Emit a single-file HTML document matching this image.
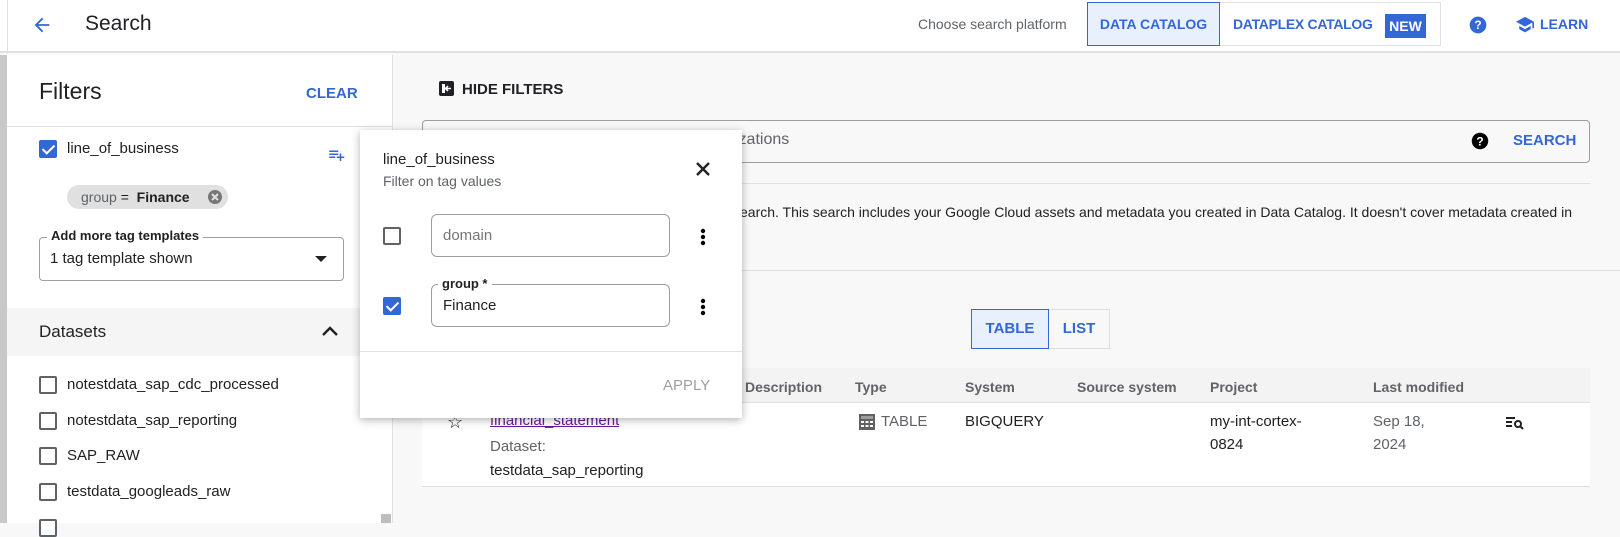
<!DOCTYPE html>
<html><head><meta charset="utf-8"><style>
*{box-sizing:border-box;margin:0;padding:0}
body{width:1620px;height:523px;overflow:hidden;background:#f8f8f8;font-family:"Liberation Sans",Arial,sans-serif;color:#202124;position:relative;font-size:14px}
.a{position:absolute;white-space:nowrap}
.blue{color:#3367d6}
.cb{position:absolute;width:18px;height:18px;border:2px solid #5f6368;border-radius:2px;background:#fff}
.cb.on{background:#3367d6;border-color:#3367d6}
.cb.on:after{content:"";position:absolute;left:4px;top:0px;width:5px;height:10px;border:solid #fff;border-width:0 2px 2px 0;transform:rotate(45deg)}
</style></head><body>
<!-- header -->
<div class="a" style="left:0;top:0;width:1620px;height:53px;background:#fff;border-bottom:2px solid #e0e0e0"></div>
<div class="a" style="left:7px;top:0;width:1px;height:53px;background:#e0e0e0"></div>
<svg class="a" style="left:31px;top:14px" width="22" height="22" viewBox="0 0 24 24"><path d="M20 11H7.8l5.6-5.6L12 4l-8 8 8 8 1.4-1.4L7.8 13H20z" fill="#3367d6"/></svg>
<div class="a" style="left:85px;top:12px;font-size:21px">Search</div>
<div class="a" style="left:918px;top:16px;font-size:14px;color:#5f6368">Choose search platform</div>
<div class="a" style="left:1087px;top:2px;width:133px;height:44px;background:#e8f0fe;border:1px solid #3367d6;font-size:14px;font-weight:bold;line-height:42px;text-align:center" ><span class="blue">DATA CATALOG</span></div>
<div class="a" style="left:1220px;top:2px;width:221px;height:44px;border:1px solid #e0e0e0;border-left:none"></div>
<div class="a blue" style="left:1233px;top:16px;font-size:14px;font-weight:bold;letter-spacing:-0.3px">DATAPLEX CATALOG</div>
<div class="a" style="left:1385px;top:14px;width:41px;height:24px;background:#3367d6;color:#fff;font-weight:bold;font-size:14px;text-align:center;line-height:24px">NEW</div>
<svg class="a" style="left:1468px;top:15px" width="20" height="20" viewBox="0 0 24 24"><circle cx="12" cy="12" r="10" fill="#3367d6"/><text x="12" y="17" font-size="14" font-weight="bold" fill="#fff" text-anchor="middle" font-family="Liberation Sans">?</text></svg>
<svg class="a" style="left:1515px;top:16px" width="20" height="18" viewBox="0 0 24 22"><path d="M12 1L1 7l11 6 9-5v7h2V7z M5 12v4l7 4 7-4v-4l-7 4z" fill="#3367d6"/></svg>
<div class="a blue" style="left:1540px;top:16px;font-size:14px;font-weight:bold">LEARN</div>

<!-- sidebar -->
<div class="a" style="left:0;top:55px;width:7px;height:468px;background:#c8c8c8"></div>
<div class="a" style="left:7px;top:55px;width:386px;height:468px;background:#fff;border-right:1px solid #e0e0e0"></div>
<div class="a" style="left:39px;top:78px;font-size:23px">Filters</div>
<div class="a blue" style="left:306px;top:85px;font-size:15px;font-weight:bold">CLEAR</div>
<div class="a" style="left:7px;top:126px;width:386px;height:1px;background:#e0e0e0"></div>
<div class="cb on" style="left:39px;top:140px"></div>
<div class="a" style="left:67px;top:140px;font-size:15px">line_of_business</div>
<svg class="a" style="left:326px;top:146px" width="20" height="18" viewBox="0 0 24 24"><path d="M3 6h12v2H3zm0 4h12v2H3zm0 4h8v2H3zm14 0v-4h2v4h4v2h-4v4h-2v-4h-4v-2z" fill="#3367d6"/></svg>
<div class="a" style="left:67px;top:185px;width:161px;height:24px;background:#e0e0e0;border-radius:12px"></div>
<div class="a" style="left:81px;top:189px;font-size:14px;color:#5f6368">group <span style="color:#202124">=</span> &nbsp;<span style="color:#202124;font-weight:bold">Finance</span></div>
<svg class="a" style="left:207px;top:189px" width="16" height="16" viewBox="0 0 16 16"><circle cx="8" cy="8" r="7" fill="#757575"/><path d="M5 5l6 6M11 5l-6 6" stroke="#e0e0e0" stroke-width="2"/></svg>
<div class="a" style="left:39px;top:237px;width:305px;height:44px;border:1px solid #9e9e9e;border-radius:4px"></div>
<div class="a" style="left:47px;top:228px;background:#fff;padding:0 4px;font-size:13px;font-weight:bold">Add more tag templates</div>
<div class="a" style="left:50px;top:250px;font-size:15px">1 tag template shown</div>
<div class="a" style="left:315px;top:256px;width:0;height:0;border-left:6px solid transparent;border-right:6px solid transparent;border-top:6px solid #202124"></div>
<div class="a" style="left:7px;top:308px;width:386px;height:48px;background:#f5f5f5"></div>
<div class="a" style="left:39px;top:322px;font-size:17px">Datasets</div>
<svg class="a" style="left:320px;top:323px" width="20" height="16" viewBox="0 0 20 16"><path d="M3 12l7-7 7 7" stroke="#202124" stroke-width="2.4" fill="none"/></svg>
<div class="cb" style="left:39px;top:376px"></div><div class="a" style="left:67px;top:376px;font-size:15px">notestdata_sap_cdc_processed</div>
<div class="cb" style="left:39px;top:412px"></div><div class="a" style="left:67px;top:412px;font-size:15px">notestdata_sap_reporting</div>
<div class="cb" style="left:39px;top:447px"></div><div class="a" style="left:67px;top:447px;font-size:15px">SAP_RAW</div>
<div class="cb" style="left:39px;top:483px"></div><div class="a" style="left:67px;top:483px;font-size:15px">testdata_googleads_raw</div>
<div class="cb" style="left:39px;top:519px"></div>
<div class="a" style="left:381px;top:514px;width:10px;height:9px;background:#bdbdbd"></div>

<!-- main -->
<svg class="a" style="left:438px;top:80px" width="17" height="17" viewBox="0 0 17 17"><rect x="1" y="1" width="15" height="15" rx="2" fill="#202124"/><rect x="4" y="4" width="3" height="9" fill="#fff"/><path d="M13 8.5H8M10 6l-2.5 2.5L10 11" stroke="#fff" stroke-width="1.6" fill="none"/></svg>
<div class="a" style="left:462px;top:81px;font-size:15px;font-weight:bold">HIDE FILTERS</div>
<div class="a" style="left:422px;top:120px;width:1168px;height:43px;border:1px solid #9e9e9e;border-radius:4px;background:#f8f8f8"></div>
<div class="a" style="left:735px;top:131px;font-size:16px;color:#5f6368">izations</div>
<svg class="a" style="left:1471px;top:132px" width="18" height="18" viewBox="0 0 24 24"><circle cx="12" cy="12" r="11" fill="#000"/><text x="12" y="18" font-size="16" font-weight="bold" fill="#fff" text-anchor="middle" font-family="Liberation Sans">?</text></svg>
<div class="a blue" style="left:1513px;top:132px;font-size:15px;font-weight:bold">SEARCH</div>
<div class="a" style="left:422px;top:183px;width:1168px;height:1px;background:#e0e0e0"></div>
<div class="a" style="left:740px;top:204px;font-size:14px">earch. This search includes your Google Cloud assets and metadata you created in Data Catalog. It doesn't cover metadata created in</div>
<div class="a" style="left:393px;top:270px;width:1227px;height:1px;background:#e0e0e0"></div>
<div class="a" style="left:971px;top:309px;width:78px;height:40px;background:#e8f0fe;border:1px solid #3367d6;line-height:38px;text-align:center;font-weight:bold;font-size:15px;color:#3367d6">TABLE</div>
<div class="a" style="left:1049px;top:309px;width:61px;height:40px;border:1px solid #ddd;border-left:none;line-height:38px;text-align:center;font-weight:bold;font-size:15px;color:#3367d6">LIST</div>
<div class="a" style="left:422px;top:368px;width:1168px;height:35px;background:#f3f3f3;border-bottom:1px solid #e0e0e0"></div>
<div class="a" style="left:422px;top:403px;width:1168px;height:84px;background:#fff;border-bottom:1px solid #e0e0e0"></div>
<div class="a" style="top:379px;left:745px;font-size:14px;font-weight:bold;color:#5f6368">Description</div>
<div class="a" style="top:379px;left:855px;font-size:14px;font-weight:bold;color:#5f6368">Type</div>
<div class="a" style="top:379px;left:965px;font-size:14px;font-weight:bold;color:#5f6368">System</div>
<div class="a" style="top:379px;left:1077px;font-size:14px;font-weight:bold;color:#5f6368">Source system</div>
<div class="a" style="top:379px;left:1210px;font-size:14px;font-weight:bold;color:#5f6368">Project</div>
<div class="a" style="top:379px;left:1373px;font-size:14px;font-weight:bold;color:#5f6368">Last modified</div>
<div class="a" style="left:447px;top:412px;font-size:18px">☆</div>
<div class="a" style="left:490px;top:412px;font-size:15px;color:#6a1b9a;text-decoration:underline">financial_statement</div>
<div class="a" style="left:490px;top:438px;font-size:15px;color:#5f6368">Dataset:</div>
<div class="a" style="left:490px;top:462px;font-size:15px">testdata_sap_reporting</div>
<svg class="a" style="left:858px;top:413px" width="18" height="18" viewBox="0 0 18 18"><rect x="1" y="1" width="16" height="16" fill="#616161"/><path d="M3 3h12v3H3z" fill="#9e9e9e"/><g fill="#fff"><rect x="3" y="8" width="3" height="2"/><rect x="7.5" y="8" width="3" height="2"/><rect x="12" y="8" width="3" height="2"/><rect x="3" y="12" width="3" height="2"/><rect x="7.5" y="12" width="3" height="2"/><rect x="12" y="12" width="3" height="2"/></g></svg>
<div class="a" style="left:881px;top:413px;font-size:15px;color:#5f6368">TABLE</div>
<div class="a" style="left:965px;top:413px;font-size:15px">BIGQUERY</div>
<div class="a" style="left:1210px;top:413px;font-size:15px">my-int-cortex-</div>
<div class="a" style="left:1210px;top:436px;font-size:15px">0824</div>
<div class="a" style="left:1373px;top:413px;font-size:15px;color:#5f6368">Sep 18,</div>
<div class="a" style="left:1373px;top:436px;font-size:15px;color:#5f6368">2024</div>
<svg class="a" style="left:1505px;top:414px" width="20" height="16" viewBox="0 0 20 16"><path d="M1 4h9M1 8h6M1 12h6" stroke="#202124" stroke-width="2"/><circle cx="13" cy="10" r="3" stroke="#202124" stroke-width="2" fill="none"/><path d="M15 12l3 3" stroke="#202124" stroke-width="2"/></svg>

<!-- popover -->
<div class="a" style="left:360px;top:130px;width:382px;height:288px;background:#fff;box-shadow:0 2px 8px rgba(0,0,0,.3)"></div>
<div class="a" style="left:383px;top:151px;font-size:15px">line_of_business</div>
<div class="a" style="left:383px;top:173px;font-size:14px;color:#5f6368">Filter on tag values</div>
<svg class="a" style="left:695px;top:161px" width="16" height="16" viewBox="0 0 16 16"><path d="M2 2l12 12M14 2L2 14" stroke="#202124" stroke-width="2.4"/></svg>
<div class="cb" style="left:383px;top:227px"></div>
<div class="a" style="left:431px;top:214px;width:239px;height:43px;border:1px solid #9e9e9e;border-radius:6px"></div>
<div class="a" style="left:443px;top:227px;font-size:15px;color:#757575">domain</div>
<svg class="a" style="left:699px;top:227px" width="8" height="20" viewBox="0 0 8 20"><circle cx="4" cy="4" r="2.2"/><circle cx="4" cy="10" r="2.2"/><circle cx="4" cy="16" r="2.2"/></svg>
<div class="cb on" style="left:383px;top:297px"></div>
<div class="a" style="left:431px;top:284px;width:239px;height:43px;border:1px solid #9e9e9e;border-radius:6px"></div>
<div class="a" style="left:438px;top:276px;background:#fff;padding:0 4px;font-size:13px;font-weight:bold">group *</div>
<div class="a" style="left:443px;top:297px;font-size:15px">Finance</div>
<svg class="a" style="left:699px;top:297px" width="8" height="20" viewBox="0 0 8 20"><circle cx="4" cy="4" r="2.2"/><circle cx="4" cy="10" r="2.2"/><circle cx="4" cy="16" r="2.2"/></svg>
<div class="a" style="left:360px;top:351px;width:382px;height:1px;background:#e0e0e0"></div>
<div class="a" style="left:663px;top:377px;font-size:15px;color:#9e9e9e">APPLY</div>
</body></html>
